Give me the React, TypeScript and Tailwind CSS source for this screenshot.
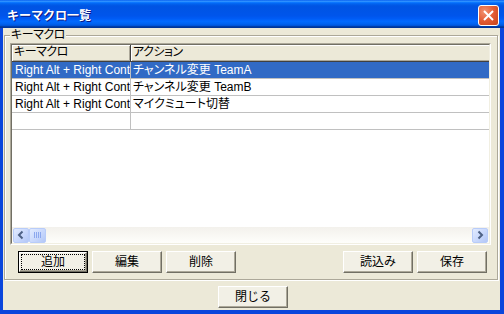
import React from 'react';

const rows = [
    { keys: 'Right Alt + Right Control + 1', action: 'チャンネル変更 TeamA' },
    { keys: 'Right Alt + Right Control + 2', action: 'チャンネル変更 TeamB' },
    { keys: 'Right Alt + Right Control + M', action: 'マイクミュート切替' },
];

function Chevron({ dir }: { dir: 'left' | 'right' }) {
    return (
        <svg width="14" height="14" viewBox="0 0 14 14" className="block">
            {dir === 'left' ? (
                <polyline points="8.5,3.5 5,7 8.5,10.5" fill="none" stroke="#4D6185" strokeWidth="2" />
            ) : (
                <polyline points="5.5,3.5 9,7 5.5,10.5" fill="none" stroke="#4D6185" strokeWidth="2" />
            )}
        </svg>
    );
}

function ScrollButton({ dir }: { dir: 'left' | 'right' }) {
    return (
        <div className="w-[16px] h-[15px] shrink-0 rounded-[2px] border border-[#B8CCF9] bg-[linear-gradient(135deg,#E2EBFE_0%,#C6D6FC_60%,#B3C7F6_100%)] flex items-center justify-center">
            <Chevron dir={dir} />
        </div>
    );
}

function Button({ children, isDefault }: { children: React.ReactNode; isDefault?: boolean }) {
    if (isDefault) {
        return (
            <div className="w-[70px] h-[22px] border border-black flex">
                <div className="flex-1 flex p-[1px] bg-[#F2F0E6] border border-t-white border-l-white border-r-[#716F64] border-b-[#716F64] shadow-[inset_-1px_-1px_0_#ACA899]">
                    <div className="flex-1 border border-dotted border-black flex items-center justify-center text-[12px] leading-none">
                        {children}
                    </div>
                </div>
            </div>
        );
    }
    return (
        <div className="w-[70px] h-[22px] bg-[#F2F0E6] border border-t-white border-l-white border-r-[#716F64] border-b-[#716F64] shadow-[inset_-1px_-1px_0_#ACA899] flex items-center justify-center text-[12px] leading-none">
            {children}
        </div>
    );
}

export default function App() {
    return (
        <div className="w-[504px] h-[314px] flex flex-col bg-[#0A46DC] font-['Liberation_Sans','Noto_Sans_CJK_JP',sans-serif] text-black overflow-hidden">
            {/* Title bar */}
            <div className="h-[28px] shrink-0 flex justify-between items-start bg-[linear-gradient(180deg,#0058EE_0%,#3593FF_4%,#288EFF_6%,#127DFF_8%,#036FFC_10%,#0262EE_14%,#0057E5_20%,#0054E3_24%,#0055EB_56%,#005BF5_66%,#026AFE_76%,#0062EF_86%,#0052D6_92%,#0040AB_94%,#003092_100%)]">
                <span className="mt-[8px] ml-[7px] text-[12px] leading-[14px] font-bold text-white [text-shadow:1px_1px_0_#0A1883] font-['Noto_Sans_CJK_JP',sans-serif]">
                    キーマクロ一覧
                </span>
                <div className="mt-[5px] mr-[5px] w-[21px] h-[21px] rounded-[3px] border border-white bg-[radial-gradient(circle_at_30%_30%,#F29371_0%,#E35B33_50%,#C5431A_100%)] flex items-center justify-center">
                    <svg width="19" height="19" viewBox="0 0 19 19" className="block">
                        <line x1="5" y1="5" x2="14" y2="14" stroke="white" strokeWidth="2" />
                        <line x1="14" y1="5" x2="5" y2="14" stroke="white" strokeWidth="2" />
                    </svg>
                </div>
            </div>

            {/* Client area */}
            <div className="flex-1 flex flex-col ml-[3px] mr-[4px] mb-[4px] bg-[#ECE9D8]">
                <fieldset className="ml-[1px] mr-[2px] border border-[#ACA899] shadow-[inset_1px_1px_0_#fff,1px_1px_0_#fff] pl-[5px] pr-[6px] pt-[1px] pb-[6px]">
                    <legend className="px-[1px] bg-[#ECE9D8] text-[12px] leading-[14px] [font-feature-settings:'palt'] tracking-[-0.5px]">
                        キーマクロ
                    </legend>

                    {/* List view */}
                    <div className="h-[202px] flex flex-col border border-t-[#ACA899] border-l-[#ACA899] border-r-white border-b-white">
                        <div className="flex-1 min-h-0 flex flex-col bg-white border border-t-[#716F64] border-l-[#716F64] border-r-[#F1EFE2] border-b-[#F1EFE2]">
                            <div className="h-[17px] shrink-0 flex bg-[#ECE9D8] text-[12px]">
                                <div className="w-[119px] shrink-0 border-r border-b border-[#404040] shadow-[inset_1px_1px_0_#fff,inset_-1px_-1px_0_#ACA899] pl-[2px] leading-[15px] [font-feature-settings:'palt'] tracking-[-0.5px]">
                                    キーマクロ
                                </div>
                                <div className="flex-1 border-b border-[#404040] shadow-[inset_1px_1px_0_#fff,inset_0_-1px_0_#ACA899] pl-[2px] leading-[15px] [font-feature-settings:'palt'] tracking-[-0.5px]">
                                    アクション
                                </div>
                            </div>

                            {rows.map((r, i) => (
                                <div
                                    key={i}
                                    className={`h-[17px] shrink-0 flex border-b border-[#C0C0C0] text-[12px] leading-[16px] ${i === 0 ? 'bg-[#316AC5] text-white' : ''}`}
                                >
                                    <div className="w-[119px] shrink-0 border-r border-[#C0C0C0] pl-[3px] overflow-hidden whitespace-nowrap">
                                        {r.keys}
                                    </div>
                                    <div className="flex-1 pl-[2px] overflow-hidden whitespace-nowrap [font-feature-settings:'palt']">
                                        {r.action}
                                    </div>
                                </div>
                            ))}
                            <div className="h-[17px] shrink-0 flex border-b border-[#C0C0C0]">
                                <div className="w-[119px] shrink-0 border-r border-[#C0C0C0]" />
                                <div className="flex-1" />
                            </div>

                            <div className="flex-1" />

                            {/* Horizontal scrollbar */}
                            <div className="h-[16px] shrink-0 flex items-center px-[1px] bg-[linear-gradient(180deg,#F3F1EC,#FEFEFB)]">
                                <ScrollButton dir="left" />
                                <div className="w-[17px] h-[15px] shrink-0 rounded-[2px] border border-[#B8CCF9] bg-[linear-gradient(135deg,#E2EBFE_0%,#C6D6FC_60%,#B3C7F6_100%)] flex items-center justify-center gap-[1px]">
                                    <div className="w-[1px] h-[6px] bg-[#8CA8EE]" />
                                    <div className="w-[1px] h-[6px] bg-[#8CA8EE]" />
                                    <div className="w-[1px] h-[6px] bg-[#8CA8EE]" />
                                    <div className="w-[1px] h-[6px] bg-[#8CA8EE]" />
                                </div>
                                <div className="flex-1" />
                                <ScrollButton dir="right" />
                            </div>
                        </div>
                    </div>

                    {/* Buttons */}
                    <div className="mt-[6px] flex justify-between pl-[8px] pr-[4px]">
                        <div className="flex gap-[4px]">
                            <Button isDefault>追加</Button>
                            <Button>編集</Button>
                            <Button>削除</Button>
                        </div>
                        <div className="flex gap-[4px]">
                            <Button>読込み</Button>
                            <Button>保存</Button>
                        </div>
                    </div>
                </fieldset>

                <div className="mt-[6px] flex justify-center pl-[3px]">
                    <Button>閉じる</Button>
                </div>
            </div>
        </div>
    );
}
